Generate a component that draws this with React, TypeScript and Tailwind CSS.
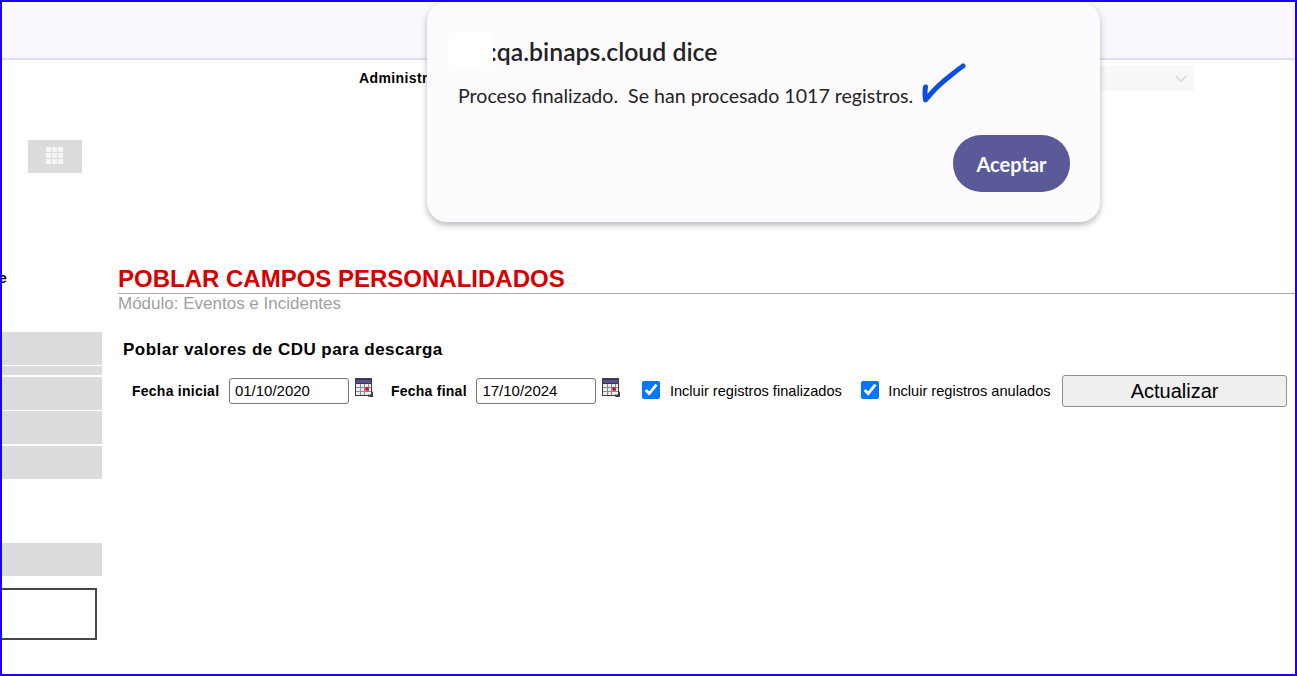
import { ChevronDown } from 'lucide-react'

const arial = "font-['Liberation_Sans',Arial,sans-serif]"
const dialogFont = "font-['Lato',sans-serif]"

function CalendarIcon() {
  return (
    <svg width="19" height="20" viewBox="0 0 19 20" className="shrink-0">
      <rect x="0" y="0" width="17" height="18" fill="#3c3a44" />
      <rect x="1" y="2" width="15" height="3" fill="#5b4a94" />
      <rect x="1" y="6" width="15" height="11" fill="#ececec" />
      <path d="M1 9.500h15M1 13.500h15M5.500 6v11M9.500 6v11M13.500 6v11" stroke="#8a8a8a" strokeWidth="1" />
      <circle cx="12" cy="11" r="2" fill="#d3102a" />
      <path d="M13 19h5v-6l-5 6z" fill="#44424a" />
      <path d="M13 14h3v2h-3z" fill="#f4f4f4" />
    </svg>
  )
}

function SideBlock({ className }: { className: string }) {
  return <div className={`w-full bg-[#dcdcdc] ${className}`} />
}

function DateField({ label, value }: { label: string; value: string }) {
  return (
    <>
      <label className="text-[14px] font-bold tracking-[0.25px] text-black">{label}</label>
      <input
        type="text"
        defaultValue={value}
        className="ml-[9.6px] h-[26px] w-[120px] rounded-[3px] border border-[#767676] bg-white px-[5px] pb-[2px] text-[15px] text-black"
      />
      <div className="ml-[6px] -mt-[6px]">
        <CalendarIcon />
      </div>
    </>
  )
}

function Check({ label }: { label: string }) {
  return (
    <label className="flex items-center">
      <input type="checkbox" defaultChecked className="-mt-[2px] h-[18px] w-[18px] accent-[#0075ff]" />
      <span className="ml-[9.5px] mt-[2px] text-[14.6px] text-black">{label}</span>
    </label>
  )
}

export default function App() {
  return (
    <div className={`relative h-[676px] w-[1297px] overflow-hidden border-2 border-[#1a00ff] bg-white ${arial}`}>
      <header className="h-[58px] border-b-2 border-[#e0dfe8] bg-[#faf8fe]" />

      <div className="flex">
        <aside className="flex w-[100px] shrink-0 flex-col">
          <div className="ml-[26px] mt-[80px] flex h-[33px] w-[54px] items-center justify-center bg-[#dcdcdc] pb-[2px] pr-[2px]">
            <svg width="17" height="17" viewBox="0 0 17 17" fill="#f6f6f6">
              {[0, 6, 12].map((y) =>
                [0, 6, 12].map((x) => <rect key={`${x}-${y}`} x={x} y={y} width="5" height="5" />),
              )}
            </svg>
          </div>
          <div className="-ml-[3px] mt-[97px] h-[16px] text-[14px] font-bold leading-[16px] text-black">e</div>
          <SideBlock className="mt-[46px] h-[33px]" />
          <SideBlock className="mt-px h-[9px]" />
          <SideBlock className="mt-[2px] h-[33px]" />
          <SideBlock className="mt-px h-[33px]" />
          <SideBlock className="mt-[2px] h-[33px]" />
          <SideBlock className="mt-[64px] h-[33px]" />
          <div className="mt-[12px] h-[52px] w-[95px] border-2 border-l-0 border-[#484848]" />
        </aside>

        <main className="min-w-0 flex-1">
          <div className="flex h-[31px] items-end">
            <span className="mb-[3px] ml-[257px] text-[14px] font-bold leading-[20px] tracking-[0.4px] text-black">Administración</span>
            <div className="ml-auto mr-[101px] flex h-[25px] w-[300px] items-center justify-end bg-[#f8f8f8] pr-[4px]">
              <ChevronDown className="h-[18px] w-[18px] text-[#dcdcdc]" strokeWidth={2.5} />
            </div>
          </div>

          <div className="ml-[16px] mt-[175px]">
            <h1 className="mb-px text-[24px] font-bold leading-[26px] text-[#d60000]">POBLAR CAMPOS PERSONALIDADOS</h1>
            <div className="h-px bg-[#a8a8a8]" />
            <p className="mt-px text-[17px] leading-[18px] text-[#a0a0a0]">Módulo: Eventos e Incidentes</p>
          </div>

          <h2 className="ml-[21px] mt-[27px] text-[17px] font-bold leading-[20px] tracking-[0.47px] text-black">
            Poblar valores de CDU para descarga
          </h2>

          <div className="ml-[30px] mt-[15px] flex items-center">
            <DateField label="Fecha inicial" value="01/10/2020" />
            <div className="w-[17px]" />
            <DateField label="Fecha final" value="17/10/2024" />
            <div className="ml-[21px]">
              <Check label="Incluir registros finalizados" />
            </div>
            <div className="ml-[19px]">
              <Check label="Incluir registros anulados" />
            </div>
            <button className="ml-[11px] h-[32px] w-[225px] rounded-[3px] border border-[#8f8f8f] bg-[#efefef] pb-[2px] pl-px text-[20px] text-black">
              Actualizar
            </button>
          </div>
        </main>
      </div>

      {/* dialogo */}
      <div className={`absolute left-[425px] top-0 h-[220px] w-[673px] rounded-[20px] bg-[#fefbff] shadow-[0_3px_6px_rgba(90,100,110,0.45)] ${dialogFont}`}>
        <div className="absolute left-[63.500px] top-[31.500px] text-[24.8px] font-semibold leading-[36px] text-[#242424]">
          :qa.binaps.cloud dice
        </div>
        <div className="absolute left-[22px] top-[31px] h-[37px] w-[44px] bg-white" />
        <div className="absolute left-[31px] top-[81px] text-[19.6px] leading-[26px] text-[#242424]">
          <span className="whitespace-pre">Proceso finalizado.  Se han procesado 1017 registros.</span>
        </div>
        <svg width="50" height="46" viewBox="0 0 50 46" className="absolute left-[493px] top-[60px]">
          <path
            d="M5.500 25C4.500 30 5 34 5.500 38C12 30 22 20 30 14C35 10 40 6 43 4"
            fill="none"
            stroke="#0b4fdc"
            strokeWidth="5"
            strokeLinecap="round"
            strokeLinejoin="round"
          />
        </svg>
        <button className="absolute left-[526px] top-[133px] h-[57px] w-[117px] rounded-[28px] bg-[#5a5a99] text-[20px] font-bold text-white">
          Aceptar
        </button>
      </div>
    </div>
  )
}
